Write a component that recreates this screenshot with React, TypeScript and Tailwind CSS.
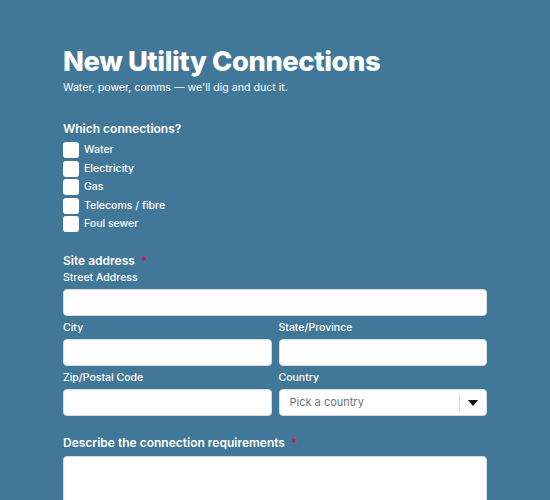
const connections = ["Water", "Electricity", "Gas", "Telecoms / fibre", "Foul sewer"];

function Field({ label, children }: { label: string; children: React.ReactNode }) {
  return (
    <div className="flex flex-col">
      <label className="text-[10.5px] leading-[12px] font-medium text-white mb-[5px]">{label}</label>
      {children}
    </div>
  );
}

export default function App() {
  return (
    <div className="min-h-[500px] w-full bg-[#417899] font-['Inter',sans-serif] text-white">
      <div className="mx-auto w-[424px] pt-[44px]">
        <h1 className="text-[27.3px] leading-[36px] font-extrabold tracking-[-0.4px]">New Utility Connections</h1>
        <p className="text-[10.6px] leading-[14px] mt-[1px]">Water, power, comms — we'll dig and duct it.</p>

        <div className="mt-[26px]">
          <p className="text-[12px] leading-[16px] font-semibold">Which connections?</p>
          <div className="mt-[5px] flex flex-col gap-[2.5px]">
            {connections.map((c) => (
              <label key={c} className="flex items-center gap-[5px]">
                <span className="h-[16px] w-[16px] rounded-[3px] bg-white" />
                <span className="text-[10.5px] leading-[16px] font-medium">{c}</span>
              </label>
            ))}
          </div>
        </div>

        <div className="mt-[21px]">
          <p className="text-[12px] leading-[16px] font-semibold">
            Site address <span className="text-[#c2185b] ml-[3px]">*</span>
          </p>
          <div className="mt-[3px] flex flex-col gap-[6px]">
            <Field label="Street Address">
              <div className="h-[27px] rounded-[4px] bg-white border border-[#d4dde3]" />
            </Field>
            <div className="grid grid-cols-2 gap-[7px]">
              <Field label="City">
                <div className="h-[27px] rounded-[4px] bg-white border border-[#d4dde3]" />
              </Field>
              <Field label="State/Province">
                <div className="h-[27px] rounded-[4px] bg-white border border-[#d4dde3]" />
              </Field>
            </div>
            <div className="grid grid-cols-2 gap-[7px]">
              <Field label="Zip/Postal Code">
                <div className="h-[27px] rounded-[4px] bg-white border border-[#d4dde3]" />
              </Field>
              <Field label="Country">
                <div className="h-[27px] rounded-[4px] bg-white border border-[#d4dde3] flex items-center">
                  <span className="flex-1 pl-[10px] text-[11px] text-[#6b7280]">Pick a country</span>
                  <span className="h-[18px] w-px bg-[#d4dde3]" />
                  <span className="w-[26px] flex justify-center">
                    <svg width="10" height="6" viewBox="0 0 10 6"><path d="M0 0h10L5 6z" fill="#111" /></svg>
                  </span>
                </div>
              </Field>
            </div>
          </div>
        </div>

        <div className="mt-[19px]">
          <p className="text-[12px] leading-[16px] font-semibold">
            Describe the connection requirements <span className="text-[#c2185b] ml-[3px]">*</span>
          </p>
          <div className="mt-[5px] h-[80px] rounded-[4px] bg-white border border-[#d4dde3]" />
        </div>
      </div>
    </div>
  );
}
